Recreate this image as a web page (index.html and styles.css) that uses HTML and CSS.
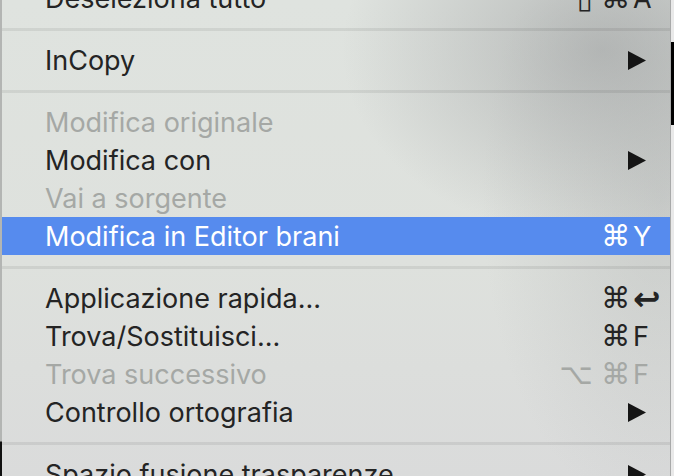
FILE: index.html
```html
<!DOCTYPE html>
<html lang="it">
<head>
  <meta charset="UTF-8">
  <title>Menu contestuale</title>
  <link rel="stylesheet" href="styles.css">
</head>
<body>
  <div class="screen">
    <div class="edge edge-left"></div>

    <div class="menu">
      <div class="menu-list">
        <div class="item">
          <span class="label">Deseleziona tutto</span>
          <span class="keys"><span class="mods"><span>▯</span><span>⌘</span></span><span class="key">A</span></span>
        </div>
        <div class="sep"></div>

        <div class="item">
          <span class="label">InCopy</span>
          <svg class="arrow" width="18" height="19" viewBox="0 0 18 19"><polygon points="0,0 18,9.5 0,19"/></svg>
        </div>
        <div class="sep"></div>

        <div class="item disabled">
          <span class="label">Modifica originale</span>
        </div>
        <div class="item">
          <span class="label">Modifica con</span>
          <svg class="arrow" width="18" height="19" viewBox="0 0 18 19"><polygon points="0,0 18,9.5 0,19"/></svg>
        </div>
        <div class="item disabled">
          <span class="label">Vai a sorgente</span>
        </div>
        <div class="item active">
          <span class="label">Modifica in Editor brani</span>
          <span class="keys"><span class="mods"><span>⌘</span></span><span class="key">Y</span></span>
        </div>
        <div class="sep"></div>

        <div class="item">
          <span class="label">Applicazione rapida...</span>
          <span class="keys"><span class="mods"><span>⌘</span></span><span class="key return">↩</span></span>
        </div>
        <div class="item">
          <span class="label">Trova/Sostituisci...</span>
          <span class="keys"><span class="mods"><span>⌘</span></span><span class="key">F</span></span>
        </div>
        <div class="item disabled">
          <span class="label">Trova successivo</span>
          <span class="keys"><span class="mods"><span>⌥</span><span>⌘</span></span><span class="key">F</span></span>
        </div>
        <div class="item">
          <span class="label">Controllo ortografia</span>
          <svg class="arrow" width="18" height="19" viewBox="0 0 18 19"><polygon points="0,0 18,9.5 0,19"/></svg>
        </div>
        <div class="sep"></div>

        <div class="item">
          <span class="label">Spazio fusione trasparenze</span>
          <svg class="arrow" width="18" height="19" viewBox="0 0 18 19"><polygon points="0,0 18,9.5 0,19"/></svg>
        </div>
      </div>
    </div>

    <div class="edge edge-right"></div>
  </div>
</body>
</html>
```

FILE: styles.css
```css
body {
  margin: 0;
  width: 674px;
  height: 476px;
  overflow: hidden;
  background: #e6e6e6;
  font-family: "Inter", "Liberation Sans", "DejaVu Sans", sans-serif;
}
.screen {
  display: flex;
  height: 476px;
}
.edge {
  flex: none;
}
.edge-left {
  width: 2px;
  background: linear-gradient(to bottom, #b3b5b3 0, #b3b5b3 441px, #111 442px, #111 100%);
}
.edge-right {
  width: 3px;
  background: linear-gradient(to bottom, #e9e9e9 0, #e9e9e9 42px, #000 42px, #000 125px, #e9e9e9 125px);
}
.menu {
  width: 668px;
  flex: none;
  overflow: hidden;
  border-right: 1px solid #a8a9a9;
  background:
    radial-gradient(ellipse 260px 190px at 600px 50px, rgba(150,152,153,0.55), rgba(150,152,153,0) 100%),
    radial-gradient(ellipse 180px 320px at 660px 200px, rgba(165,167,168,0.35), rgba(165,167,168,0) 100%),
    linear-gradient(to bottom, #dfe3df 0, #dee1dd 260px, #dadbdb 476px);
}
.menu-list {
  margin-top: -21px;
}
.item {
  height: 38px;
  display: flex;
  align-items: center;
  padding: 0 21px 0 43px;
  font-size: 27px;
  color: #242424;
}
.item.disabled {
  color: #a5a8a5;
}
.item.active {
  background: #568bee;
  color: #fff;
}
.label {
  flex: 1;
  white-space: nowrap;
}
.keys {
  display: flex;
  align-items: center;
  flex: none;
}
.mods {
  display: flex;
  gap: 8px;
  font-family: "DejaVu Sans", sans-serif;
  font-size: 29px;
  line-height: 1;
}
.key {
  width: 16px;
  margin-left: 3px;
  white-space: nowrap;
}
.key.return {
  font-family: "DejaVu Sans", sans-serif;
  font-weight: bold;
  font-size: 33px;
  line-height: 1;
}
.arrow {
  flex: none;
  margin-right: 3px;
  fill: #151515;
}
.sep {
  height: 24px;
  display: flex;
  align-items: center;
}
.sep::after {
  content: "";
  flex: 1;
  height: 3px;
  background: rgba(0,0,0,0.07);
}
```
